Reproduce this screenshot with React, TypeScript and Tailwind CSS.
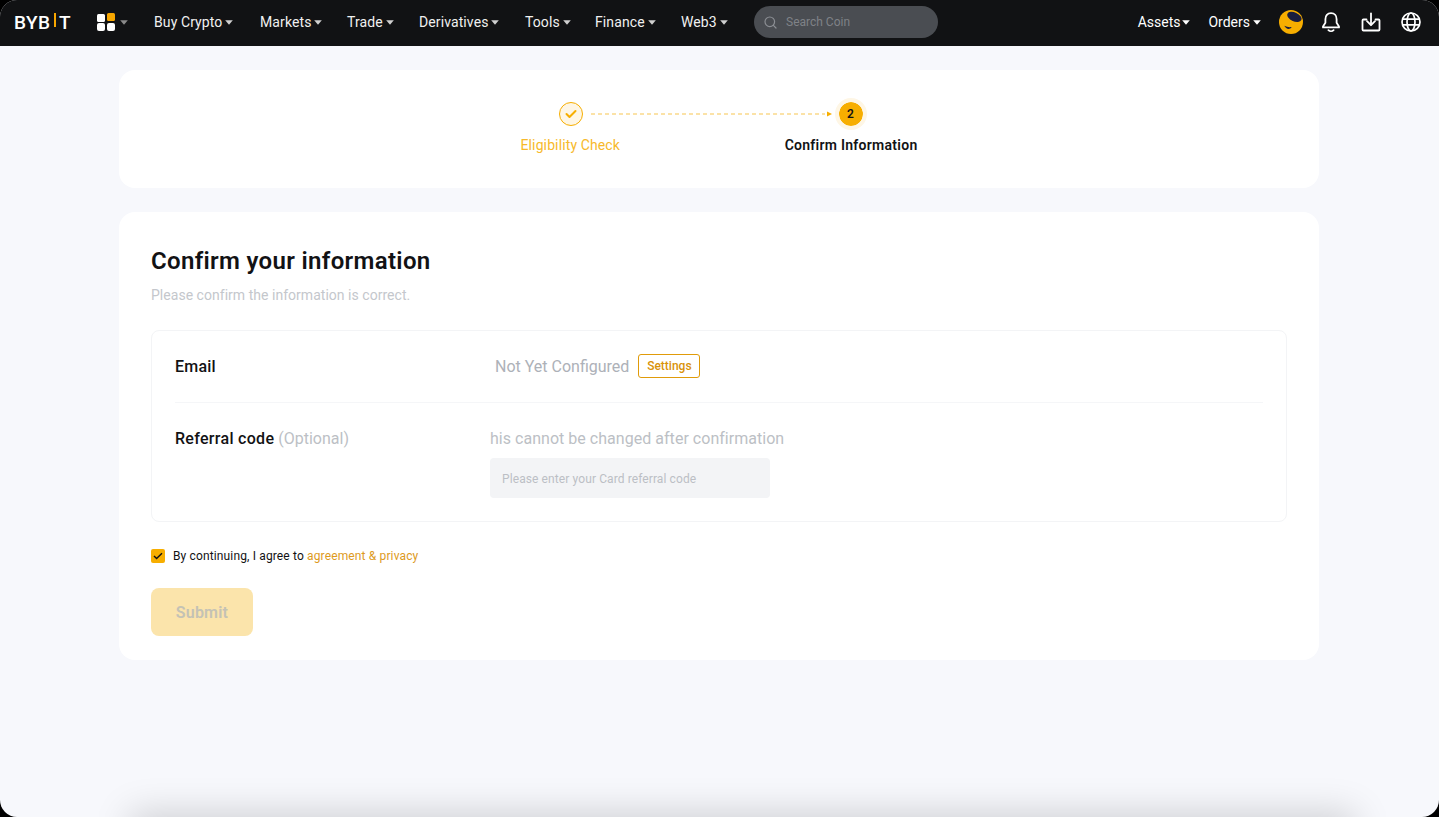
import React from "react";

const font = { fontFamily: "Roboto, 'Noto Sans', sans-serif" };

function Caret({ className = "text-white" }: { className?: string }) {
  return (
    <svg width="8" height="5" viewBox="0 0 8 5" className={className}>
      <path d="M0.2 0.2h7.6L4 4.8z" fill="currentColor" />
    </svg>
  );
}

function NavItem({ label, w }: { label: string; w: string }) {
  return (
    <div className={`flex items-center gap-[3px] ${w}`}>
      <span className="whitespace-nowrap text-[14px] leading-5 tracking-[0.1px] text-[#f0f0f0]">{label}</span>
      <Caret className="text-[#d0d0d0]" />
    </div>
  );
}

function Header() {
  return (
    <header className="flex h-[46px] items-center bg-[#111214] pb-[2px] pl-[14px] pr-[18px]">
      <div className="mt-[2px] flex h-[20px] w-[57px] items-center text-[19px] font-medium leading-[20px] tracking-[0.5px] text-white">
        <span>BYB</span>
        <span className="mx-[3px] mb-[6px] h-[14px] w-[2.5px] shrink-0 bg-[#f7a600]" />
        <span>T</span>
      </div>
      <svg width="18" height="18" viewBox="0 0 18 18" className="ml-[26px]">
        <rect x="0" y="1" width="8" height="8" rx="1.5" fill="#fff" />
        <rect x="10" y="0" width="8" height="8" rx="1.5" fill="#f7a600" />
        <rect x="0" y="10" width="8" height="8" rx="2" fill="#fff" />
        <rect x="10" y="10" width="8" height="8" rx="2" fill="#fff" />
      </svg>
      <Caret className="ml-[5px] text-[#8a8a8a]" />
      <nav className="ml-[26px] flex items-center">
        <NavItem label="Buy Crypto" w="w-[106px]" />
        <NavItem label="Markets" w="w-[87px]" />
        <NavItem label="Trade" w="w-[72px]" />
        <NavItem label="Derivatives" w="w-[106px]" />
        <NavItem label="Tools" w="w-[70px]" />
        <NavItem label="Finance" w="w-[86px]" />
        <NavItem label="Web3" w="w-[73px]" />
      </nav>
      <div className="flex h-[32px] w-[184px] items-center gap-[9px] rounded-full bg-[#4a4d52] pl-[10px]">
        <svg width="13" height="13" viewBox="0 0 13 13" fill="none" stroke="#8b8e93" strokeWidth="1.2">
          <circle cx="5.8" cy="5.8" r="4.8" />
          <path d="M9.4 9.4l2.6 2.6" strokeLinecap="round" />
        </svg>
        <span className="text-[12px] text-[#7f8287]">Search Coin</span>
      </div>
      <div className="ml-auto flex items-center">
        <div className="flex items-center gap-[2px]">
          <span className="text-[14px] text-white">Assets</span>
          <Caret />
        </div>
        <div className="ml-[18px] flex items-center gap-[3px]">
          <span className="text-[14px] text-white">Orders</span>
          <Caret />
        </div>
        <svg width="24" height="24" viewBox="0 0 24 24" className="ml-[18px]">
          <circle cx="12" cy="12" r="12" fill="#f7ae00" />
          <ellipse cx="15.4" cy="6.9" rx="7.6" ry="4.4" transform="rotate(24 15.4 6.9)" fill="#1b1e3e" />
          <path d="M5.3 15.8c2.4 1.2 5 1.6 7.4 1.2-1.6 2.8-5.6 2.6-7.4-1.2z" fill="#1b1e3e" />
        </svg>
        <svg width="20" height="22" viewBox="0 0 20 22" fill="none" stroke="#fff" strokeWidth="1.8" className="ml-[18px]" strokeLinejoin="round" strokeLinecap="round">
          <path d="M10 2.2c-3.6 0-5.6 2.7-5.6 6v3.6L2 15.4v1h16v-1l-2.4-3.6V8.2c0-3.3-2-6-5.6-6z" />
          <path d="M7.4 19.2c1.4 1.3 3.8 1.3 5.2 0" />
        </svg>
        <svg width="20" height="20" viewBox="0 0 20 20" fill="none" stroke="#fff" strokeWidth="1.8" className="ml-[20px]" strokeLinejoin="round" strokeLinecap="round">
          <path d="M5.5 7.5H2.5a1 1 0 0 0-1 1v9a1 1 0 0 0 1 1h15a1 1 0 0 0 1-1v-9a1 1 0 0 0-1-1h-3" />
          <path d="M10 1.5v11" />
          <path d="M6 9.2l4 4 4-4" />
        </svg>
        <svg width="20" height="20" viewBox="0 0 20 20" fill="none" stroke="#fff" strokeWidth="1.7" className="ml-[20px]">
          <circle cx="10" cy="10" r="9" />
          <ellipse cx="10" cy="10" rx="4" ry="9" />
          <path d="M1.4 7.2h17.2M1.4 12.8h17.2" />
        </svg>
      </div>
    </header>
  );
}

function Stepper() {
  return (
    <section className="flex h-[118px] flex-col items-center rounded-[16px] bg-white pt-[32px]">
      <div className="flex w-[397px] flex-col">
        <div className="flex h-[24px] items-center">
          <div className="ml-[38px] flex h-[24px] w-[24px] items-center justify-center rounded-full border border-[#f7ae00] bg-[#fef6e5]">
            <svg width="12" height="10" viewBox="0 0 12 10" fill="none" stroke="#f7ae00" strokeWidth="2" strokeLinecap="round" strokeLinejoin="round">
              <path d="M1.5 5l3 3 6-6" />
            </svg>
          </div>
          <svg width="241" height="6" viewBox="0 0 241 6" className="ml-[8px]">
            <path d="M0 3h234" stroke="#fad98a" strokeWidth="1.5" strokeDasharray="4 3" />
            <path d="M236 0.5l5 2.5-5 2.5z" fill="#f7ae00" />
          </svg>
          <div className="ml-[7px] flex h-[24px] w-[24px] items-center justify-center rounded-full bg-[#f7ae00] text-[12px] font-semibold text-[#121214] outline-[4px] outline-[#fef6e5]">
            2
          </div>
        </div>
        <div className="mt-[9px] flex justify-between text-[14px] leading-5">
          <span className="whitespace-nowrap tracking-[0.12px] text-[#f7b92a]">Eligibility Check</span>
          <span className="whitespace-nowrap font-semibold tracking-[0.27px] text-[#121214]">Confirm Information</span>
        </div>
      </div>
    </section>
  );
}

function ConfirmCard() {
  return (
    <section className="mt-[24px] flex h-[448px] flex-col rounded-[16px] bg-white px-[32px] pt-[32px]">
      <h1 className="text-[24px] font-semibold leading-[34px] tracking-[0.33px] text-[#121214]">Confirm your information</h1>
      <p className="mt-[7px] text-[14px] leading-5 tracking-[0.03px] text-[#c4c7cc]">Please confirm the information is correct.</p>
      <div className="mt-[25px] flex h-[192px] flex-col rounded-[8px] border border-[#f3f4f6] px-[23px]">
        <div className="flex h-[72px] items-center border-b border-[#f5f6f8]">
          <span className="w-[320px] text-[16px] font-medium tracking-[0.2px] text-[#121214]">Email</span>
          <span className="text-[16px] text-[#adb1b8]">Not Yet Configured</span>
          <button className="mb-[2px] ml-[9px] flex h-[24px] w-[62px] items-center justify-center rounded-[3px] border border-[#e09b0a] text-[12px] font-medium text-[#d9920a]">
            Settings
          </button>
        </div>
        <div className="flex pt-[26px]">
          <div className="w-[315px] text-[16px] leading-5">
            <span className="font-medium tracking-[0.3px] text-[#121214]">Referral code</span>{" "}
            <span className="text-[#bcbfc5]">(Optional)</span>
          </div>
          <div className="flex flex-col">
            <span className="text-[16px] leading-5 tracking-[0.03px] text-[#bcbfc5]">his cannot be changed after confirmation</span>
            <div className="mt-[9px] flex h-[40px] w-[280px] items-center rounded-[4px] bg-[#f3f4f6] px-[12px] pt-[2px] text-[12px] tracking-[0.1px] text-[#bcbfc5]">
              Please enter your Card referral code
            </div>
          </div>
        </div>
      </div>
      <div className="mt-[26px] flex items-center gap-[8px]">
        <div className="flex h-[14px] w-[14px] items-center justify-center rounded-[2px] bg-[#f7ae00]">
          <svg width="10" height="8" viewBox="0 0 10 8" fill="none" stroke="#121214" strokeWidth="1.4">
            <path d="M1 4l2.6 2.6L9 1.2" />
          </svg>
        </div>
        <span className="text-[12px] leading-4 tracking-[0.14px] text-[#121214]">
          By continuing, I agree to <span className="text-[#dd9a1d]">agreement &amp; privacy</span>
        </span>
      </div>
      <button className="mt-[24px] flex h-[48px] w-[102px] items-center justify-center rounded-[8px] bg-[#fbe4ab] pt-[2px] text-[16px] font-semibold tracking-[0.2px] text-[#c4c2b5]">
        Submit
      </button>
    </section>
  );
}

export default function App() {
  return (
    <div className="h-[817px] w-[1439px] overflow-hidden bg-black" style={font}>
      <div className="relative flex h-full flex-col overflow-hidden rounded-[17px] bg-[#f7f8fc]">
        <Header />
        <main className="ml-[119px] mt-[24px] w-[1200px]">
          <Stepper />
          <ConfirmCard />
        </main>
        <div className="absolute bottom-[-40px] left-[130px] h-[40px] w-[1225px] shadow-[0_-4px_36px_rgba(0,0,0,0.17)]" />
      </div>
    </div>
  );
}
